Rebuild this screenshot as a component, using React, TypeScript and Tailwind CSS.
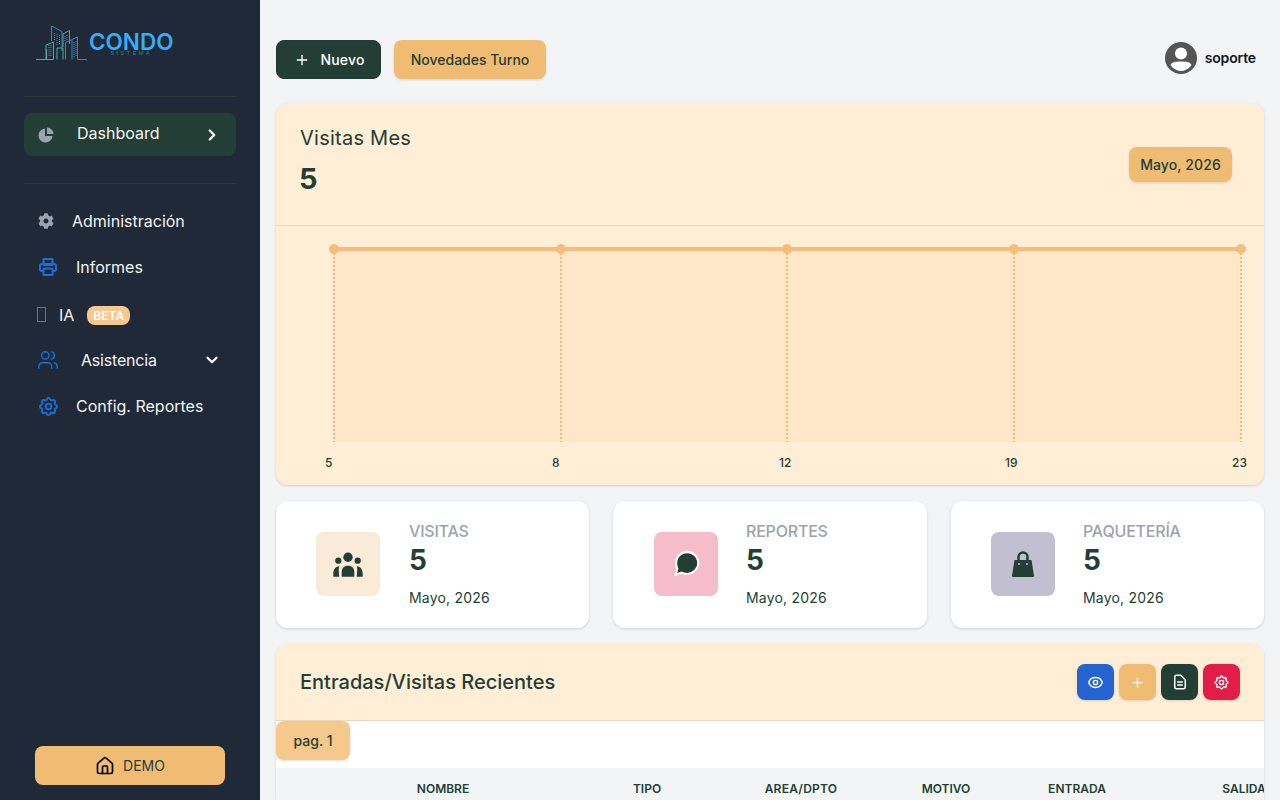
import { ChevronDown, ChevronRight, House, Plus, Users } from "lucide-react";
import { FaCog } from "react-icons/fa";
import { HiOutlineCog, HiOutlineDocumentText, HiOutlineEye } from "react-icons/hi";

const chartX = [58, 285, 511, 738, 965];
const chartLabels = [
  { text: "5", w: "w-[227px]" },
  { text: "8", w: "w-[227px]" },
  { text: "12", w: "w-[226px]" },
  { text: "19", w: "w-[227px]" },
  { text: "23", w: "w-[20px]" },
];

function Logo() {
  return (
    <svg width="54" height="36" viewBox="0 0 54 36" fill="none" className="shrink-0">
      <path d="M0 34.5H17.5V17L10 20V34.5M0 34.5H10" stroke="#3db39e" strokeWidth="1" />
      <path d="M10.5 34.5V24" stroke="#3db39e" strokeWidth="1" />
      <path d="M15.5 16V1L26 6.5V26" stroke="#3f7fc4" strokeWidth="1" />
      <path d="M21 34.5V23H27V34.5" stroke="#3db39e" strokeWidth="1" />
      <path d="M27 22V9L33.5 5.5V19" stroke="#3db39e" strokeWidth="1" />
      <path d="M29.5 34.5V17.5L41.5 12V34.5H51" stroke="#3f7fc4" strokeWidth="1" />
      <path d="M36 34.5V15" stroke="#3f7fc4" strokeWidth="1" />
      <path d="M13 20V32M15 20V32M18.5 8V16M21 9V20M23.5 10V20M29 11V17M31 10V15M38 17V32M40 16V32" stroke="#4f8fb8" strokeWidth="1" strokeDasharray="1 1" />
    </svg>
  );
}

function Avatar() {
  return (
    <svg width="32" height="32" viewBox="0 0 32 32">
      <circle cx="16" cy="16" r="16" fill="#555555" />
      <circle cx="16" cy="11.5" r="6" fill="#ffffff" />
      <path d="M5.5 23C7 20 10 19.5 16 19.5C22 19.5 25 20 26.5 23C24 26.5 20 29 16 29C12 29 8 26.5 5.5 23Z" fill="#ffffff" />
    </svg>
  );
}

function PieIcon() {
  return (
    <svg width="16" height="16" viewBox="0 0 16 16" fill="#9ca3af" className="ml-px shrink-0">
      <path d="M7 1.5A7 7 0 1 0 14.5 9H7Z" />
      <path d="M9 0.5A6.5 6.5 0 0 1 15.5 7H9Z" />
    </svg>
  );
}

function PrinterIcon() {
  return (
    <svg width="18" height="18" viewBox="0 0 18 18" fill="none" stroke="#1a6fd8" strokeWidth="2">
      <rect x="4.5" y="1" width="9" height="6" rx="0.5" />
      <path d="M4 13H2.5A1.5 1.5 0 0 1 1 11.5V8A2 2 0 0 1 3 6H15A2 2 0 0 1 17 8V11.5A1.5 1.5 0 0 1 15.5 13H14" />
      <rect x="4.5" y="10.5" width="9" height="6.5" rx="0.5" />
    </svg>
  );
}

function GroupIcon() {
  return (
    <svg width="30" height="26" viewBox="0 -1 30 26" fill="#233f35">
      <circle cx="15" cy="5.3" r="4.7" />
      <circle cx="5.3" cy="8.7" r="3.1" />
      <circle cx="24.7" cy="8.7" r="3.1" />
      <path d="M8.7 24.7V20C8.7 16 11 13.7 15 13.7C19 13.7 21.3 16 21.3 20V24.7Z" />
      <path d="M0.3 24.7V22C0.3 17.5 2 14.5 6.3 14.2C5.2 16 6.3 24.7 6.3 24.7Z" />
      <path d="M29.7 24.7V22C29.7 17.5 28 14.5 23.7 14.2C24.8 16 23.7 24.7 23.7 24.7Z" />
    </svg>
  );
}

function ChatIcon() {
  return (
    <svg width="32" height="32" viewBox="0 0 28 28">
      <path d="M15 2.5C21 2.5 25.5 7 25.5 13C25.5 19 21 23.5 15 23.5C12.8 23.5 11.5 23 10 22.3L3.5 24.8L5.5 18.5C4.8 16.8 4.5 15 4.5 13C4.5 7 9 2.5 15 2.5Z" fill="#ffffff" />
      <path d="M15 4.5C20 4.5 23.8 8.2 23.8 13C23.8 17.8 20 21.8 15 21.8C13 21.8 11.6 21.2 10.2 20.5L6.3 21.8L7.4 18C6.6 16.5 6.3 14.8 6.3 13C6.3 8.2 10 4.5 15 4.5Z" fill="#233f35" />
    </svg>
  );
}

function BagIcon() {
  return (
    <svg width="22" height="26" viewBox="0 0 22 26">
      <path d="M6.5 12V6A4.5 4.5 0 0 1 15.5 6V12" fill="none" stroke="#233f35" strokeWidth="2.5" />
      <path d="M2.5 9H19.5L22 24.8Q22 26 21 26H1Q0 26 0 24.8Z" fill="#233f35" />
      <circle cx="7" cy="13" r="1" fill="#c2c0d0" />
      <circle cx="15" cy="13" r="1" fill="#c2c0d0" />
    </svg>
  );
}

function NavItem({ icon, label, gap, right }: { icon: React.ReactNode; label: string; gap: string; right?: React.ReactNode }) {
  return (
    <div className="flex items-center h-[46px] pl-[13px] pr-[15px] text-white">
      <span className="w-[22px] flex justify-center shrink-0">{icon}</span>
      <span className={`${gap} text-base text-[#f3f4f6]`}>{label}</span>
      {right}
    </div>
  );
}

function StatCard({ icon, box, title, value, pad, gap }: { icon: React.ReactNode; box: string; title: string; value: string; pad: string; gap: string }) {
  return (
    <div className={`flex-1 h-[127px] bg-white rounded-xl shadow-[0_1px_3px_rgba(0,0,0,0.15)] flex items-center ${pad}`}>
      <div className={`w-16 h-16 mb-[2px] rounded-lg flex items-center justify-center ${box}`}>{icon}</div>
      <div className={`${gap} flex flex-col`}>
        <span className="text-base leading-5 font-medium tracking-[-0.2px] text-[#9ca3af]">{title}</span>
        <span className="text-[28px] leading-[38px] font-bold text-[#233f35]">{value}</span>
        <span className="mt-[9px] text-sm leading-5 text-[#233f35] tracking-[0.2px]">Mayo, 2026</span>
      </div>
    </div>
  );
}

function SquareBtn({ className, children }: { className: string; children: React.ReactNode }) {
  return (
    <div className={`w-[37px] h-9 rounded-lg flex items-center justify-center text-white shadow-sm ${className}`}>{children}</div>
  );
}

export default function App() {
  return (
    <div className="flex h-screen w-full overflow-hidden bg-[#f3f4f6] font-['Inter',sans-serif]">
      <aside className="w-[260px] shrink-0 bg-[#1f2937] px-6 flex flex-col">
        <div className="h-[97px] shrink-0 border-b border-[#233f35] flex items-start pt-[25px] pl-3">
          <Logo />
          <div className="-ml-[1px] flex flex-col items-center">
            <span className="text-[22.5px] leading-[18px] mt-[8px] font-semibold text-[#36adf6]">CONDO</span>
            <span className="text-[5.5px] leading-[5px] text-[#0e8fa8] tracking-[2.5px] font-['Liberation_Sans',sans-serif]">SISTEMA</span>
          </div>
        </div>
        <div className="mt-4 h-[43px] shrink-0 rounded-lg bg-[#233f35] flex items-center pl-[13px] pr-[15px]">
          <PieIcon />
          <span className="ml-[23px] mb-[4px] text-base text-[#f3f4f6]">Dashboard</span>
          <ChevronRight className="ml-auto w-[18px] h-[18px] text-white" strokeWidth={3} />
        </div>
        <div className="mt-[27px] border-t border-[#233f35]" />
        <nav className="mt-[14px] flex flex-col">
          <NavItem icon={<FaCog className="w-4 h-4 mr-1 text-[#9ca3af]" />} label="Administración" gap="ml-[13px]" />
          <NavItem icon={<PrinterIcon />} label="Informes" gap="ml-[17px]" />
          <div className="flex items-center h-[47px] pl-[13px] pt-[2px] text-white">
            <span className="w-[9px] h-[15px] border border-[#6b7280] shrink-0" />
            <span className="ml-[13px] text-base text-[#f3f4f6]">IA</span>
            <span className="ml-[13px] mt-[2px] h-[19px] px-[6px] rounded-lg bg-[#f5c890] text-white text-xs font-semibold leading-[19px]">BETA</span>
          </div>
          <NavItem
            icon={<Users className="w-[22px] h-[22px] text-[#1a6fd8]" strokeWidth={1.5} />}
            label="Asistencia"
            gap="ml-[22px] tracking-[-0.2px]"
            right={<ChevronDown className="ml-auto w-[18px] h-[18px] text-white" strokeWidth={3} />}
          />
          <NavItem icon={<HiOutlineCog className="w-[23px] h-[23px] shrink-0 text-[#1a6fd8]" />} label="Config. Reportes" gap="ml-[17px]" />
        </nav>
        <div className="mt-auto mb-[15px] mx-[11px] h-[39px] shrink-0 rounded-lg bg-[#f0bc74] flex items-center justify-center gap-2 text-sm text-[#233f35]">
          <House className="w-5 h-5 text-black" />
          DEMO
        </div>
      </aside>

      <main className="flex-1 min-w-0 px-4 pt-10 flex flex-col gap-4">
        <div className="h-[39px] mb-2 flex items-center shrink-0">
          <div className="h-[39px] w-[105px] pl-[2px] rounded-lg bg-[#233f35] flex items-center justify-center gap-2 text-sm font-medium tracking-[0.2px] text-white border border-[#1f3a30]">
            <Plus className="w-4 h-4" />
            <span className="ml-[2px]">Nuevo</span>
          </div>
          <div className="ml-[13px] h-[39px] w-[152px] rounded-lg bg-[#f0bc74] flex items-center justify-center text-sm font-medium text-[#233f35] shadow-sm">
            Novedades Turno
          </div>
          <div className="ml-auto mb-1 flex items-center gap-2 pr-2">
            <Avatar />
            <span className="text-sm font-semibold tracking-[-0.15px] text-[#111827]">soporte</span>
          </div>
        </div>

        <section className="h-[382px] shrink-0 rounded-xl bg-[#feeed6] shadow-[0_1px_3px_rgba(0,0,0,0.15)] flex flex-col">
          <div className="h-[123px] shrink-0 border-b border-[#e8d8c0] flex items-center justify-between pl-6 pr-8">
            <div className="self-start pt-[21px] flex flex-col">
              <span className="text-xl leading-7 tracking-[0.25px] text-[#233f35]">Visitas Mes</span>
              <span className="mt-[11px] -ml-px text-[29px] leading-8 font-bold text-[#233f35]">5</span>
            </div>
            <div className="h-[35px] w-[103px] pt-[2px] rounded-lg bg-[#f0bc74] flex items-center justify-center text-sm font-medium tracking-[0.1px] text-[#233f35] shadow-sm">
              Mayo, 2026
            </div>
          </div>
          <svg width="988" height="218" viewBox="0 0 988 218" className="shrink-0">
            <rect x={58} y={23} width={907} height={193} fill="#fee6c8" />
            {chartX.map((x) => (
              <line key={x} x1={x} y1={23} x2={x} y2={216} stroke="#f5b971" strokeWidth="2" strokeDasharray="2 2" />
            ))}
            <line x1={58} y1={23} x2={965} y2={23} stroke="#f5bd7c" strokeWidth="4" />
            {chartX.map((x) => (
              <circle key={x} cx={x} cy={23} r={5} fill="#f5bd7c" />
            ))}
          </svg>
          <div className="flex pl-[49px] text-xs font-medium leading-4 text-[#233f35] mt-[11px]">
            {chartLabels.map((l) => (
              <span key={l.text} className={l.w}>{l.text}</span>
            ))}
          </div>
        </section>

        <div className="flex gap-6 shrink-0">
          <StatCard pad="pl-10" gap="ml-[29px]" box="bg-[#f9ebd7]" title="VISITAS" value="5" icon={<GroupIcon />} />
          <StatCard pad="pl-[41px]" gap="ml-[28px]" box="bg-[#f5bccb]" title="REPORTES" value="5" icon={<ChatIcon />} />
          <StatCard pad="pl-10" gap="ml-[28px]" box="bg-[#c2c0d0]" title="PAQUETERÍA" value="5" icon={<BagIcon />} />
        </div>

        <section className="flex-1 min-h-0 bg-white rounded-t-xl shadow-[0_1px_3px_rgba(0,0,0,0.15)] overflow-hidden flex flex-col">
          <div className="h-[77px] shrink-0 bg-[#feeed6] border-b border-[#e8d8c0] flex items-center justify-between pl-6 pr-6">
            <span className="text-xl text-[#233f35] font-medium">Entradas/Visitas Recientes</span>
            <div className="flex gap-[5px]">
              <SquareBtn className="bg-[#2563d0]"><HiOutlineEye className="w-[17px] h-[17px]" /></SquareBtn>
              <SquareBtn className="bg-[#f0bc74]"><Plus className="w-[15px] h-[15px]" /></SquareBtn>
              <SquareBtn className="bg-[#233f35]"><HiOutlineDocumentText className="w-[18px] h-[18px]" /></SquareBtn>
              <SquareBtn className="bg-[#e11d48]"><HiOutlineCog className="w-[17px] h-[17px]" /></SquareBtn>
            </div>
          </div>
          <div className="h-[47px] shrink-0">
            <div className="w-[74px] h-[39px] rounded-lg bg-[#f5c88c] flex items-center justify-center text-sm font-medium text-[#233f35] shadow-sm">
              pag. 1
            </div>
          </div>
          <div className="h-10 shrink-0 bg-[#f3f4f6] flex pt-[13px] text-xs font-semibold leading-4 text-[#233f35] whitespace-nowrap">
            <span className="w-[64px] shrink-0" />
            <span className="w-[206px] shrink-0 text-center">NOMBRE</span>
            <span className="w-[202px] shrink-0 text-center">TIPO</span>
            <span className="w-[106px] shrink-0 text-center tracking-[0.25px]">AREA/DPTO</span>
            <span className="w-[184px] shrink-0 text-center">MOTIVO</span>
            <span className="w-[78px] shrink-0 text-center">ENTRADA</span>
            <span className="w-[256px] shrink-0 text-center">SALIDA</span>
          </div>
        </section>
      </main>
    </div>
  );
}
